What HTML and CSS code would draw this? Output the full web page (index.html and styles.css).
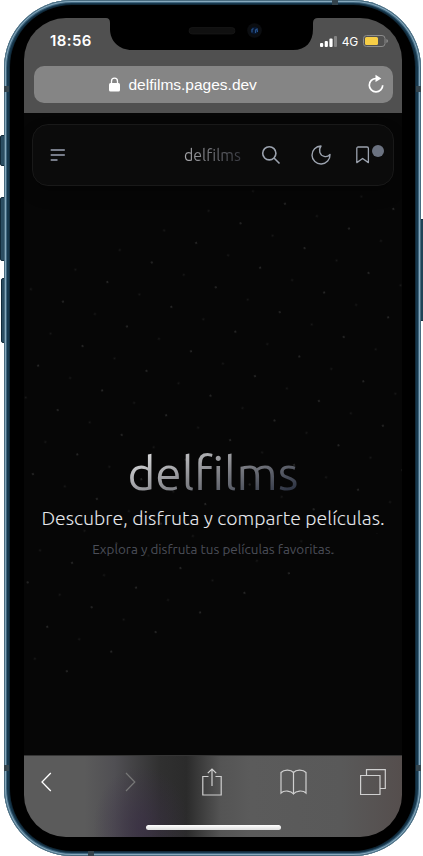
FILE: index.html
```
<!DOCTYPE html>
<html lang="es">
<head>
<meta charset="utf-8">
<meta name="viewport" content="width=device-width, initial-scale=1">
<title>delfilms</title>
<link rel="stylesheet" href="styles.css">
</head>
<body>
<div class="device">
  <i class="key key-mute"></i><i class="key key-up"></i><i class="key key-down"></i><i class="key key-power"></i>
  <div class="frame">
    <i class="band band-left"></i><i class="band band-right"></i><i class="band band-left low"></i><i class="band band-right low"></i><i class="band band-top"></i><i class="band band-bottom"></i>
    <div class="bezel">
      <div class="screen">
        <svg class="notch" width="212" height="34" viewBox="0 0 212 34"><path d="M0 0H212V1Q207 1 207 6V12C207 25 200 33 187 33H26C13 33 4 24 4 12V6Q4 1 0 1Z" fill="#000"/><rect x="83" y="10.500" width="46" height="6.500" rx="3.200" fill="#101010" stroke="#1b1b1b" stroke-width=".6"/><circle cx="148.500" cy="13.500" r="7.300" fill="#0b0d10"/><circle cx="148.500" cy="13.500" r="3.800" fill="#07152b"/><path d="M146 15.500v-3l1.500-1M149.500 16v-3l1.500-1 .5 3" stroke="#28538c" stroke-width="1.200" fill="none"/></svg>
        <header class="browser-top">
          <div class="status">
            <span class="clock">18:56</span>
            <div class="signals">
              <svg width="17" height="11" viewBox="0 0 17 11"><g fill="#fff"><rect y="7" width="3.200" height="4" rx="1"/><rect x="4.700" y="5" width="3.200" height="6" rx="1"/><rect x="9.400" y="2.500" width="3.200" height="8.500" rx="1"/><rect x="14" width="3" height="11" rx="1" opacity=".3"/></g></svg>
              <span class="network">4G</span>
              <svg width="25" height="12" viewBox="0 0 25 12"><rect x=".5" y=".5" width="21.500" height="11" rx="3" fill="none" stroke="#8b8b8b"/><rect x="2" y="2" width="13" height="8" rx="1.500" fill="#f7ce46"/><path d="M23.500 4v4q1.300-.6 1.300-2t-1.300-2" fill="#999"/></svg>
            </div>
          </div>
          <div class="address">
            <div class="url">
              <svg width="11" height="15" viewBox="0 0 11 15"><rect y="6" width="11" height="8.500" rx="1.500" fill="#fff"/><path d="M2.500 7V4.200a3 3 0 0 1 6 0V7" fill="none" stroke="#fff" stroke-width="1.300"/></svg>
              <span>delfilms.pages.dev</span>
            </div>
            <svg class="reload" width="16" height="19" viewBox="0 0 16 19"><path d="M9 4.500H8a6.700 6.700 0 1 0 6.700 6.700" fill="none" stroke="#fff" stroke-width="1.700"/><path d="M7.500.8 13.300 4.400 7.500 8z" fill="#fff"/></svg>
          </div>
        </header>
        <main class="page">
          <svg class="stars" width="378" height="642" viewBox="24 113 378 642"><defs><pattern id="grid" width="48.530" height="48.530" patternUnits="userSpaceOnUse" patternTransform="translate(63 301.700) rotate(-23.800) translate(-12 -12)"><circle cx="12" cy="12" r="1" fill="#2a2a2a"/><circle cx="36.260" cy="36.260" r="1" fill="#191919"/></pattern></defs><path d="M0 297 423 110V512L0 710Z" fill="url(#grid)"/></svg>
          <nav class="navbar">
            <svg width="16" height="14" viewBox="0 0 16 14"><path d="M.7 2.100h14.100M.7 7.100h14.100M.7 12.100h6.800" stroke="#9ca3b4" stroke-width="1.500"/></svg>
            <span class="brand">delfilms</span>
            <div class="actions">
              <svg width="20" height="20" viewBox="0 0 20 20"><circle cx="8.300" cy="8.300" r="6.600" fill="none" stroke="#9ca3af" stroke-width="1.600"/><path d="m13 13 5.500 5.500" stroke="#9ca3af" stroke-width="1.600"/></svg>
              <svg width="20" height="20" viewBox="0 0 20 20"><path d="M10 1A9 9 0 1 0 19 9.500C17.500 11.200 15.500 12 13.200 11.400 8.800 10.300 7 5.200 10 1Z" fill="none" stroke="#9ca3af" stroke-width="1.400" stroke-linejoin="round"/></svg>
              <span class="saved"><svg width="14" height="18" viewBox="0 0 14 18"><path d="M.8 16.600V2.400Q.8 1 2.200 1H11q1.400 0 1.400 1.400v14.200L6.600 12.500Z" fill="none" stroke="#9ca3af" stroke-width="1.300" stroke-linejoin="round"/></svg><i class="badge"></i></span>
            </div>
          </nav>
          <section class="hero">
            <h1>delfilms</h1>
            <h2>Descubre, disfruta y comparte películas.</h2>
            <p>Explora y disfruta tus películas favoritas.</p>
          </section>
        </main>
        <footer class="toolbar">
          <div class="tools">
            <svg width="11" height="20" viewBox="0 0 11 20"><path d="M9.800 1 1 10l8.800 9" fill="none" stroke="#fff" stroke-width="1.300"/></svg>
            <svg width="11" height="20" viewBox="0 0 11 20"><path d="m1 1 8.800 9L1 19" fill="none" stroke="#777" stroke-width="1.200"/></svg>
            <svg width="20" height="28" viewBox="0 0 20 28"><path d="M6.500 8.500H.8V27h18.400V8.500h-5.700M10 18V1M5.800 5.200 10 1l4.200 4.200" fill="none" stroke="#d0d0d0" stroke-width="1.200"/></svg>
            <svg width="27" height="26" viewBox="0 0 27 26"><path d="M13.500 25V3.500C11 .5 4 .3 1 3.500V24c3-3 10-2.500 12.500 1 2.500-3.500 9.500-4 12.500-1V3.500C23 .3 16 .5 13.500 3.500" fill="none" stroke="#d0d0d0" stroke-width="1.200"/></svg>
            <svg width="26" height="26" viewBox="0 0 26 26"><path d="M.6 6.500h19.400v19H.6ZM6.500 6V.7h18.800v18.800H20" fill="none" stroke="#d0d0d0" stroke-width="1.200"/></svg>
          </div>
          <div class="home"></div>
        </footer>
      </div>
    </div>
  </div>
</div>
</body>
</html>
```
FILE: styles.css
```
* { box-sizing: border-box; }
body { margin: 0; background: #fff; overflow: hidden; font-family: "Ubuntu", "Noto Sans", sans-serif; }
svg { display: block; flex: none; }
.device { position: relative; width: 423px; height: 856px; padding: 0 2px 0 3.500px; }
.frame { position: relative; height: 856px; padding: 5px 6px 5px 6.500px; border-radius: 68px; background: #17384d; box-shadow: inset 0 0 0 1px #496c80, inset 0 0 0 2px #86a9bd, inset 0 0 0 3px #416780; }
.bezel { height: 846px; padding: 13px 13px 14px 14px; border-radius: 62px; background: #000; box-shadow: 0 0 0 1px #102838; }
.screen { position: relative; height: 819px; display: flex; flex-direction: column; border-radius: 42px; overflow: hidden; background: #050505; }
.key { position: absolute; left: 0; width: 5px; background: #2b4d62; border: 1px solid #122b3b; border-radius: 2px 0 0 2px; }
.key-mute { top: 135px; height: 31px; }
.key-up { top: 197px; height: 64px; }
.key-down { top: 278px; height: 65px; left: 1px; }
.key-power { top: 219px; height: 102px; left: 419px; background: #204357; }
.band { position: absolute; background: #34444d; }
.band-left { left: .5px; top: 86px; width: 5px; height: 6px; }
.band-right { right: 0; top: 86px; width: 5px; height: 6px; }
.low { top: 765px; }
.band-top { left: 328px; top: 0; width: 6px; height: 5px; }
.band-bottom { left: 84px; bottom: 0; width: 6px; height: 5px; }
.notch { position: absolute; left: 82px; top: -1px; }
.browser-top { height: 95px; background: #505050; color: #fff; }
.status { height: 48px; padding: 0 14px 2px 26px; display: flex; justify-content: space-between; align-items: center; }
.clock { font: 600 15px/20px Inter, sans-serif; letter-spacing: .4px; }
.signals { display: flex; align-items: center; gap: 5px; }
.network { font: 400 12px/16px Inter, sans-serif; letter-spacing: -.2px; padding-top: 1px; }
.address { margin: 0 9.500px 0 9.500px; height: 37px; padding: 0 9px 0 75px; border-radius: 10px; background: #858585; display: flex; align-items: center; justify-content: space-between; }
.url { display: flex; align-items: center; gap: 9px; font: 15.500px/20px "Liberation Sans", sans-serif; }
.reload { margin-top: -2px; }
.page { position: relative; flex: 1; background: #060606; }
.stars { position: absolute; left: 0; top: 0; }
.navbar { position: relative; display: flex; align-items: center; height: 62px; margin: 11px 8px 0; padding: 0 9px 0 17px; background: #0b0b0b; border: 1.500px solid #191919; border-radius: 16px; box-shadow: 0 8px 15px #0004; }
.brand { width: 58px; margin-left: 118px; font-size: 15.900px; font-weight: 400; background: linear-gradient(90deg, #a8a8ac, #34363d); background-clip: text; color: transparent; }
.actions { flex: 1; display: flex; align-items: center; padding-left: 19px; gap: 30px; }
.saved { display: flex; align-items: center; gap: 2px; margin-left: -5px; }
.badge { width: 12px; height: 12px; margin-bottom: 8px; border-radius: 50%; background: #6b7280; }
.hero { position: relative; display: flex; flex-direction: column; align-items: center; margin-top: 254px; white-space: nowrap; }
h1, h2, p { margin: 0; font-weight: 300; }
h1 { font-size: 47.800px; line-height: 64px; font-weight: 400; background: linear-gradient(to bottom right, #fff, #85868b 50%, #0f172a); background-clip: text; color: transparent; }
h2 { font-size: 19.500px; line-height: 28px; color: #e5e7eb; }
p { margin-top: 7px; font-size: 13.450px; line-height: 20px; font-weight: 400; color: #4b4e58; }
.toolbar { height: 82px; padding-top: 12px; border-top: 1px solid #353535; background: radial-gradient(ellipse 48px 62px at 31% 88%, #3a2c4899, transparent), linear-gradient(90deg, #5b5b5b 16%, #504f53 24%, #303030 36%, #2b2b2b 43%, #545454 52%, #5b5b5b 60%, #595959 84%, #554e4d); }
.tools { height: 28px; margin-left: -20px; display: grid; grid-template-columns: 84px 84px 80px 82px 78px; justify-items: center; align-items: center; }
.home { width: 135px; height: 5px; margin: 29px 0 0 122px; border-radius: 3px; background: linear-gradient(#fff, #ddd); }
```
